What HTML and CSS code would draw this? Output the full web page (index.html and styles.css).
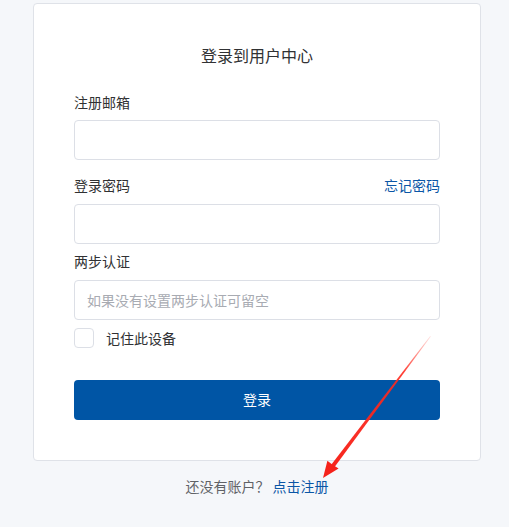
FILE: index.html
```html
<!DOCTYPE html>
<html lang="zh-CN">
<head>
<meta charset="utf-8">
<title>登录到用户中心</title>
<link rel="stylesheet" href="styles.css">
</head>
<body>
<div class="page">
  <div class="card">
    <h1 class="title">登录到用户中心</h1>
    <div class="field first">
      <div class="label-row"><span class="label">注册邮箱</span></div>
      <input class="input" type="text">
    </div>
    <div class="field second">
      <div class="label-row"><span class="label">登录密码</span><a class="link" href="#">忘记密码</a></div>
      <input class="input" type="password">
    </div>
    <div class="field third">
      <div class="label-row"><span class="label">两步认证</span></div>
      <input class="input" type="text" placeholder="如果没有设置两步认证可留空">
    </div>
    <label class="remember"><span class="checkbox"></span><span class="remember-text">记住此设备</span></label>
    <button class="btn" type="button">登录</button>
  </div>
  <div class="footer">还没有账户？ <a class="link" href="#">点击注册</a></div>
</div>
<svg class="arrow" width="509" height="527" viewBox="0 0 509 527">
  <defs>
    <linearGradient id="fade" x1="430" y1="336" x2="323" y2="478" gradientUnits="userSpaceOnUse">
      <stop offset="0" stop-color="#ff3b2f" stop-opacity="0.15"/>
      <stop offset="0.25" stop-color="#ff2a1f" stop-opacity="0.9"/>
      <stop offset="1" stop-color="#f5221a"/>
    </linearGradient>
  </defs>
  <polygon fill="url(#fade)" points="430.2,336.1 430.8,336.6 334.2,467.4 331.0,465.0"/>
  <polygon fill="#f5221a" points="323,478 327.4,460.8 332.2,464.4 338.6,468.6"/>
</svg>
</body>
</html>
```
FILE: styles.css
```css
html, body {
  margin: 0;
  padding: 0;
}
body {
  background: #f5f7fa;
  font-family: "Noto Sans CJK SC", "Noto Sans", sans-serif;
  color: #303133;
  width: 509px;
  height: 527px;
  overflow: hidden;
  position: relative;
}
.page {
  padding-top: 3px;
  padding-left: 33px;
}
.card {
  width: 366px;
  padding: 40px;
  background: #fff;
  border: 1px solid #dfe2e8;
  border-radius: 4px;
  display: flex;
  flex-direction: column;
}
.title {
  margin: 0 0 27px;
  font-size: 16px;
  font-weight: 400;
  line-height: 22px;
  text-align: center;
  color: #303133;
}
.field {
  display: flex;
  flex-direction: column;
}
.label-row {
  display: flex;
  justify-content: space-between;
  align-items: flex-start;
  height: 20px;
  line-height: 18px;
  font-size: 14px;
  margin-bottom: 8px;
}
.field.first .label-row {
  margin-bottom: 7px;
}
.field.second {
  margin-top: 16px;
}
.field.third {
  margin-top: 8px;
}
.label {
  color: #303133;
}
.link {
  color: #0a56a6;
  text-decoration: none;
}
.input {
  box-sizing: border-box;
  width: 366px;
  height: 40px;
  margin: 0;
  padding: 0 12px;
  border: 1px solid #dcdfe6;
  border-radius: 4px;
  background: #fff;
  font-family: inherit;
  font-size: 14px;
  color: #303133;
  outline: none;
}
.input::placeholder {
  color: #a8abb2;
}
.remember {
  display: flex;
  align-items: center;
  margin-top: 8px;
  height: 20px;
  font-size: 14px;
  line-height: 20px;
}
.checkbox {
  box-sizing: border-box;
  width: 20px;
  height: 20px;
  border: 1px solid #dcdfe6;
  border-radius: 4px;
  background: #fff;
  margin-right: 12px;
}
.remember-text {
  color: #303133;
  padding-bottom: 1px;
}
.btn {
  margin-top: 32px;
  height: 40px;
  width: 366px;
  border: none;
  border-radius: 4px;
  background: #0055a5;
  color: #fff;
  font-family: inherit;
  font-size: 14px;
  padding: 0 0 3px;
}
.footer {
  margin-top: 15px;
  width: 448px;
  text-align: center;
  font-size: 14px;
  line-height: 20px;
  color: #606266;
}
.arrow {
  position: absolute;
  left: 0;
  top: 0;
  pointer-events: none;
}
```
